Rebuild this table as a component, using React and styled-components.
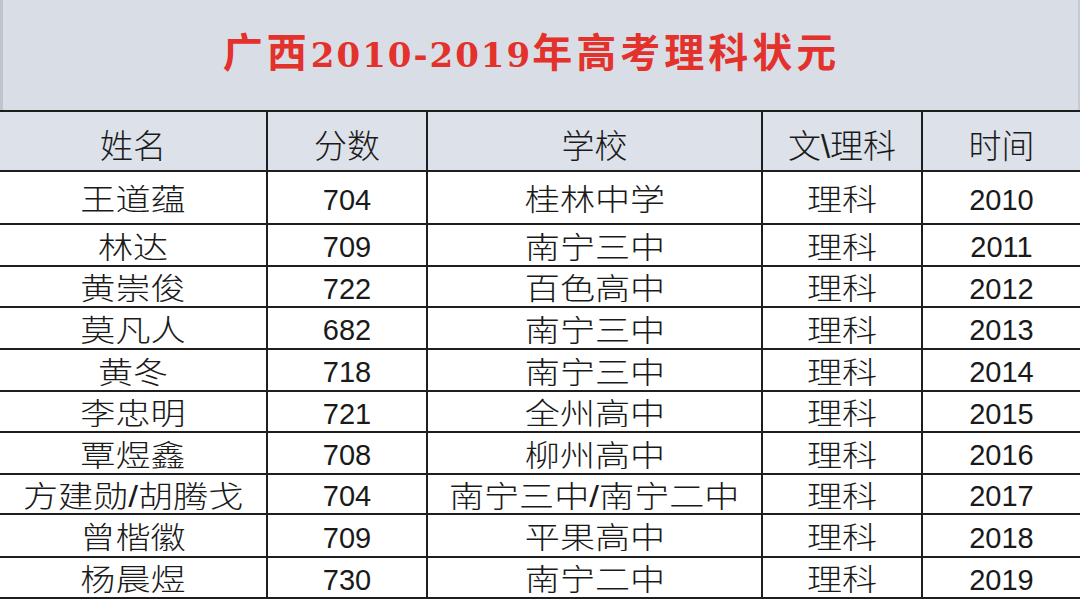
import styled, { createGlobalStyle } from 'styled-components';

const GlobalStyle = createGlobalStyle`
  html, body {
    margin: 0;
    padding: 0;
    background: #ffffff;
  }
  body {
    width: 1080px;
    height: 600px;
    overflow: hidden;
    font-family: "Liberation Sans", "Noto Sans CJK SC", sans-serif;
  }
`;

const Sheet = styled.div`
  width: 1080px;
  height: 600px;
  display: flex;
  flex-direction: column;
  overflow: hidden;
  background: #ffffff;
`;

const TitleBar = styled.div`
  height: 110px;
  flex: none;
  box-sizing: border-box;
  display: flex;
  align-items: center;
  justify-content: center;
  padding: 0 18px 8px 0;
  background: #d9dde6;
  border-left: 3px solid #c0c4cc;
  border-right: 2px solid #c6cad2;
`;

const Title = styled.h1`
  margin: 0;
  color: #e3312b;
  font-family: "Noto Sans CJK SC", sans-serif;
  font-weight: 700;
  font-size: 40px;
  letter-spacing: 4px;
  line-height: 1;
  white-space: nowrap;
`;

const TitleNum = styled.span`
  font-family: "DejaVu Serif", "Liberation Serif", serif;
  font-weight: 700;
  font-size: 34px;
  letter-spacing: 2px;
`;

const Row = styled.div`
  display: grid;
  grid-template-columns: 268px 160px 335px 160px 1fr;
  height: ${(p) => p.$h}px;
  flex: none;
  box-sizing: border-box;
  border-top: ${(p) => (p.$head ? '2px solid #1e1e1e' : 'none')};
  border-bottom: 2px solid #1e1e1e;
  background: ${(p) => (p.$head ? '#dde1e9' : '#ffffff')};
`;

const Cell = styled.div`
  display: flex;
  align-items: center;
  justify-content: center;
  box-sizing: border-box;
  padding-top: ${(p) => (p.$head ? 10 : 5)}px;
  border-right: ${(p) => (p.$last ? 'none' : '2px solid #1e1e1e')};
  color: #1a1a1a;
  font-size: ${(p) => (p.$head ? 33 : 30)}px;
  font-weight: 300;
  line-height: 1;
  white-space: nowrap;
  overflow: hidden;
`;

const Text = styled.span`
  display: inline-block;
  transform: scaleX(${(p) => (p.$stretch ? 1.17 : 1)});
  transform-origin: center;
  font-size: ${(p) => (p.$num ? '29px' : 'inherit')};
`;

const header = ['姓名', '分数', '学校', '文\\理科', '时间'];

const rows = [
  ['王道蕴', '704', '桂林中学', '理科', '2010', 53],
  ['林达', '709', '南宁三中', '理科', '2011', 42],
  ['黄崇俊', '722', '百色高中', '理科', '2012', 41],
  ['莫凡人', '682', '南宁三中', '理科', '2013', 42],
  ['黄冬', '718', '南宁三中', '理科', '2014', 42],
  ['李忠明', '721', '全州高中', '理科', '2015', 41],
  ['覃煜鑫', '708', '柳州高中', '理科', '2016', 42],
  ['方建勋/胡腾戈', '704', '南宁三中/南宁二中', '理科', '2017', 40],
  ['曾楷徽', '709', '平果高中', '理科', '2018', 43],
  ['杨晨煜', '730', '南宁二中', '理科', '2019', 41],
];

export default function App() {
  return (
    <>
      <GlobalStyle />
      <Sheet>
        <TitleBar>
          <Title>
            广西<TitleNum>2010-2019</TitleNum>年高考理科状元
          </Title>
        </TitleBar>
        <Row $head $h={62}>
          {header.map((h, i) => (
            <Cell key={h} $head $last={i === 4}>
              <Text>{h}</Text>
            </Cell>
          ))}
        </Row>
        {rows.map((r) => (
          <Row key={r[4]} $h={r[5]}>
            <Cell>
              <Text $stretch>{r[0]}</Text>
            </Cell>
            <Cell>
              <Text $num>{r[1]}</Text>
            </Cell>
            <Cell>
              <Text $stretch>{r[2]}</Text>
            </Cell>
            <Cell>
              <Text $stretch>{r[3]}</Text>
            </Cell>
            <Cell $last>
              <Text $num>{r[4]}</Text>
            </Cell>
          </Row>
        ))}
      </Sheet>
    </>
  );
}
